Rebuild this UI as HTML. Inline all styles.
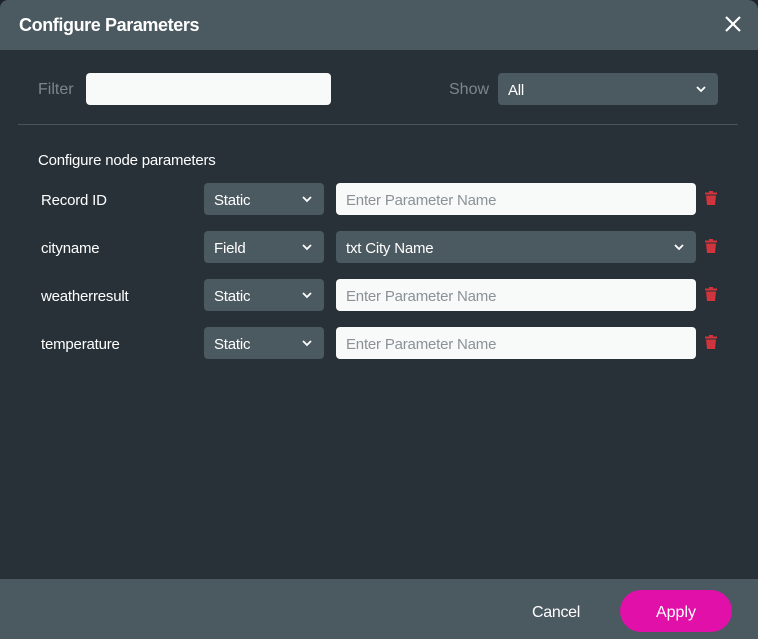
<!DOCTYPE html>
<html><head><style>
*{box-sizing:border-box;margin:0;padding:0}
body{width:758px;height:639px;background:#1e252a;font-family:"Liberation Sans",sans-serif;overflow:hidden;position:relative}
.dlg{position:absolute;left:0;top:0;width:758px;height:639px;background:#283138;border-radius:8px 10px 0 0;overflow:hidden}
.hdr{position:absolute;left:0;top:0;width:758px;height:50px;background:#4b5960}
.hdr .t{position:absolute;left:19px;top:15px;color:#fff;font-size:18px;font-weight:bold;letter-spacing:-0.4px}
.ftr{position:absolute;left:0;top:579px;width:758px;height:60px;background:#4b5960}
.abs{position:absolute}
.lbl{color:#7b868c;font-size:16px}
.w{color:#fff;font-size:15px;letter-spacing:-0.2px}
.sel{position:absolute;background:#4b5960;border-radius:4px;height:32px;color:#fff;font-size:15px;padding:9px 10px 0;letter-spacing:-0.2px}
.inp{position:absolute;background:#f8f9f9;border-radius:4px;height:32px;color:#8a9296;font-size:15px;padding:9px 10px 0;letter-spacing:-0.2px}
.chev{position:absolute;right:12px;top:13px}
</style></head><body>
<div class="dlg">
<div class="hdr"><div class="t">Configure Parameters</div>
<svg class="abs" style="left:724px;top:15px" width="18" height="18" viewBox="0 0 18 18"><path d="M2 2L16 16M16 2L2 16" stroke="#fff" stroke-width="2.2"/></svg></div>
<div class="abs lbl" style="left:38px;top:81px">Filter</div>
<div class="inp" style="left:86px;top:73px;width:245px;height:32px"></div>
<div class="abs lbl" style="left:449px;top:81px">Show</div>
<div class="sel" style="left:498px;top:73px;width:220px">All<svg class="chev" width="10" height="7" viewBox="0 0 10 7"><path d="M1 1L5 5L9 1" stroke="#fff" stroke-width="1.8" fill="none"/></svg></div>
<div class="abs" style="left:18px;top:124px;width:720px;height:1px;background:#4a555b"></div>
<div class="abs w" style="left:38px;top:152px">Configure node parameters</div>

<div class="abs w" style="left:41px;top:192px">Record ID</div>
<div class="sel" style="left:204px;top:183px;width:120px">Static<svg class="chev" width="10" height="7" viewBox="0 0 10 7"><path d="M1 1L5 5L9 1" stroke="#fff" stroke-width="1.8" fill="none"/></svg></div>
<div class="inp" style="left:336px;top:183px;width:360px">Enter Parameter Name</div>

<div class="abs w" style="left:41px;top:240px">cityname</div>
<div class="sel" style="left:204px;top:231px;width:120px">Field<svg class="chev" width="10" height="7" viewBox="0 0 10 7"><path d="M1 1L5 5L9 1" stroke="#fff" stroke-width="1.8" fill="none"/></svg></div>
<div class="sel" style="left:336px;top:231px;width:360px">txt City Name<svg class="chev" width="10" height="7" viewBox="0 0 10 7"><path d="M1 1L5 5L9 1" stroke="#fff" stroke-width="1.8" fill="none"/></svg></div>

<div class="abs w" style="left:41px;top:288px">weatherresult</div>
<div class="sel" style="left:204px;top:279px;width:120px">Static<svg class="chev" width="10" height="7" viewBox="0 0 10 7"><path d="M1 1L5 5L9 1" stroke="#fff" stroke-width="1.8" fill="none"/></svg></div>
<div class="inp" style="left:336px;top:279px;width:360px">Enter Parameter Name</div>

<div class="abs w" style="left:41px;top:336px">temperature</div>
<div class="sel" style="left:204px;top:327px;width:120px">Static<svg class="chev" width="10" height="7" viewBox="0 0 10 7"><path d="M1 1L5 5L9 1" stroke="#fff" stroke-width="1.8" fill="none"/></svg></div>
<div class="inp" style="left:336px;top:327px;width:360px">Enter Parameter Name</div>

<svg class="abs" style="left:705px;top:191px" width="12" height="14" viewBox="0 0 12 14"><path d="M4 0h4v1.5h4v2H0v-2h4z M1 4.5h10l-1 9.5H2z" fill="#d0343c"/></svg>
<svg class="abs" style="left:705px;top:239px" width="12" height="14" viewBox="0 0 12 14"><path d="M4 0h4v1.5h4v2H0v-2h4z M1 4.5h10l-1 9.5H2z" fill="#d0343c"/></svg>
<svg class="abs" style="left:705px;top:287px" width="12" height="14" viewBox="0 0 12 14"><path d="M4 0h4v1.5h4v2H0v-2h4z M1 4.5h10l-1 9.5H2z" fill="#d0343c"/></svg>
<svg class="abs" style="left:705px;top:335px" width="12" height="14" viewBox="0 0 12 14"><path d="M4 0h4v1.5h4v2H0v-2h4z M1 4.5h10l-1 9.5H2z" fill="#d0343c"/></svg>

<div class="ftr">
<div class="abs" style="left:532px;top:25px;color:#fff;font-size:16px;letter-spacing:-0.3px">Cancel</div>
<div class="abs" style="left:620px;top:11px;width:112px;height:42px;border-radius:21px;background:#e010a9;color:#fff;font-size:16px;text-align:center;line-height:45px">Apply</div>
</div>
</div>
</body></html>
